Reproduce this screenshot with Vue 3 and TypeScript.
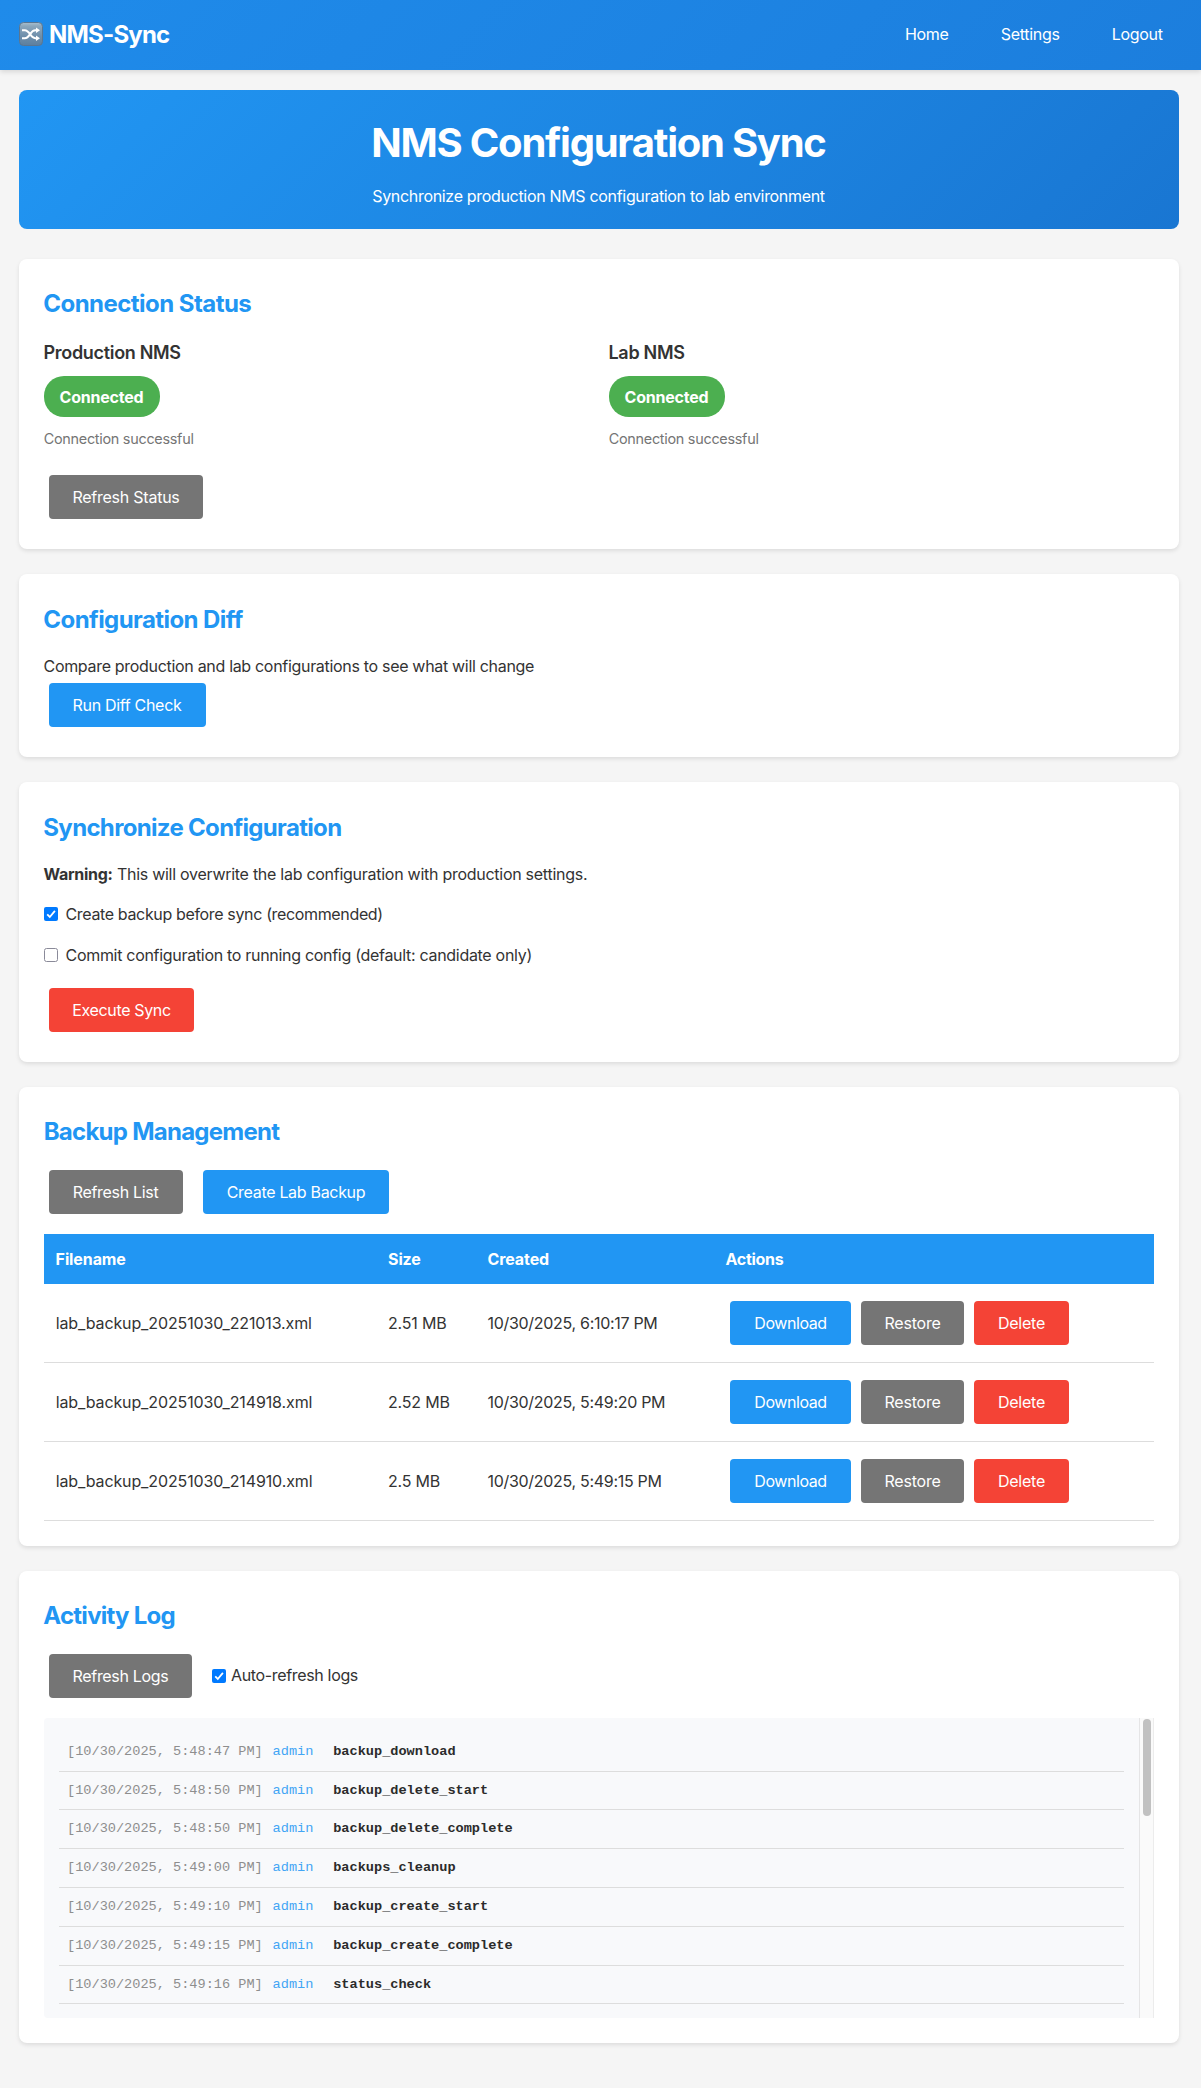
<script setup lang="ts">
import { ref } from 'vue'

interface Backup {
  filename: string
  size: string
  created: string
}

interface LogEntry {
  time: string
  user: string
  action: string
}

const navLinks: string[] = ['Home', 'Settings', 'Logout']
const systems: string[] = ['Production NMS', 'Lab NMS']

const createBackup = ref(true)
const commitConfig = ref(false)
const autoRefresh = ref(true)

const backups: Backup[] = [
  { filename: 'lab_backup_20251030_221013.xml', size: '2.51 MB', created: '10/30/2025, 6:10:17 PM' },
  { filename: 'lab_backup_20251030_214918.xml', size: '2.52 MB', created: '10/30/2025, 5:49:20 PM' },
  { filename: 'lab_backup_20251030_214910.xml', size: '2.5 MB', created: '10/30/2025, 5:49:15 PM' },
]

const logs: LogEntry[] = [
  { time: '10/30/2025, 5:48:47 PM', user: 'admin', action: 'backup_download' },
  { time: '10/30/2025, 5:48:50 PM', user: 'admin', action: 'backup_delete_start' },
  { time: '10/30/2025, 5:48:50 PM', user: 'admin', action: 'backup_delete_complete' },
  { time: '10/30/2025, 5:49:00 PM', user: 'admin', action: 'backups_cleanup' },
  { time: '10/30/2025, 5:49:10 PM', user: 'admin', action: 'backup_create_start' },
  { time: '10/30/2025, 5:49:15 PM', user: 'admin', action: 'backup_create_complete' },
  { time: '10/30/2025, 5:49:16 PM', user: 'admin', action: 'status_check' },
]
</script>

<template>
  <div class="page">
    <header class="topbar">
      <div class="brand">
        <svg class="brand-icon" viewBox="0 0 24 24" width="24" height="24" aria-hidden="true">
          <defs>
            <linearGradient id="tile" x1="0" y1="0" x2="0" y2="1">
              <stop offset="0" stop-color="#a9bfce" />
              <stop offset="0.16" stop-color="#8ba6bb" />
              <stop offset="0.6" stop-color="#6f8fab" />
              <stop offset="1" stop-color="#5c7f9f" />
            </linearGradient>
          </defs>
          <rect x="0.5" y="0.5" width="23" height="23" rx="4" fill="url(#tile)" stroke="#5a7691" />
          <path d="M3 8.2h2.8c5.2 0 5.4 8 10.4 8h1.6M3 16.2h2.8c5.2 0 5.4-8 10.4-8h1.6" fill="none" stroke="#fff" stroke-width="2" />
          <path d="M17 5.4 21 8.2 17 11zM17 13.4l4 2.8-4 2.8z" fill="#fff" />
        </svg>
        <span>NMS-Sync</span>
      </div>
      <nav class="nav">
        <a v-for="link in navLinks" :key="link">{{ link }}</a>
      </nav>
    </header>

    <main class="container">
      <section class="hero">
        <h1>NMS Configuration Sync</h1>
        <p>Synchronize production NMS configuration to lab environment</p>
      </section>

      <section class="card">
        <h2 class="h-status">Connection Status</h2>
        <div class="systems">
          <div v-for="name in systems" :key="name">
            <h3>{{ name }}</h3>
            <span class="pill">Connected</span>
            <p class="message">Connection successful</p>
          </div>
        </div>
        <div class="actions">
          <button class="btn grey b-status">Refresh Status</button>
        </div>
      </section>

      <section class="card">
        <h2 class="h-diff">Configuration Diff</h2>
        <p class="lead">Compare production and lab configurations to see what will change</p>
        <div class="actions">
          <button class="btn blue b-diff">Run Diff Check</button>
        </div>
      </section>

      <section class="card">
        <h2 class="h-sync">Synchronize Configuration</h2>
        <p class="lead warning"><strong>Warning:</strong> This will overwrite the lab configuration with production settings.</p>
        <div class="checks">
          <div class="check" @click="createBackup = !createBackup">
            <svg class="box" viewBox="0 0 14 14" width="14" height="14">
              <rect v-if="createBackup" width="14" height="14" rx="2" fill="#007aff" />
              <rect v-else x="0.5" y="0.5" width="13" height="13" rx="2" fill="#fff" stroke="#8a8a99" />
              <path v-if="createBackup" d="M3.2 7.4 5.8 10 10.9 3.9" fill="none" stroke="#fff" stroke-width="1.8" />
            </svg>
            <span class="backup-label">Create backup before sync (recommended)</span>
          </div>
          <div class="check" @click="commitConfig = !commitConfig">
            <svg class="box" viewBox="0 0 14 14" width="14" height="14">
              <rect v-if="commitConfig" width="14" height="14" rx="2" fill="#007aff" />
              <rect v-else x="0.5" y="0.5" width="13" height="13" rx="2" fill="#fff" stroke="#8a8a99" />
              <path v-if="commitConfig" d="M3.2 7.4 5.8 10 10.9 3.9" fill="none" stroke="#fff" stroke-width="1.8" />
            </svg>
            <span class="commit-label">Commit configuration to running config (default: candidate only)</span>
          </div>
        </div>
        <div class="actions">
          <button class="btn red b-sync">Execute Sync</button>
        </div>
      </section>

      <section class="card">
        <h2 class="h-backup">Backup Management</h2>
        <div class="actions spaced">
          <button class="btn grey b-list">Refresh List</button>
          <button class="btn blue b-create">Create Lab Backup</button>
        </div>
        <table>
          <colgroup>
            <col class="c-file" />
            <col class="c-size" />
            <col class="c-date" />
            <col />
          </colgroup>
          <thead>
            <tr>
              <th class="th-file">Filename</th>
              <th>Size</th>
              <th>Created</th>
              <th class="th-actions">Actions</th>
            </tr>
          </thead>
          <tbody>
            <tr v-for="b in backups" :key="b.filename">
              <td class="file">{{ b.filename }}</td>
              <td class="size">{{ b.size }}</td>
              <td class="date">{{ b.created }}</td>
              <td>
                <div class="row-actions">
                  <button class="btn blue b-download">Download</button>
                  <button class="btn grey b-restore">Restore</button>
                  <button class="btn red b-delete">Delete</button>
                </div>
              </td>
            </tr>
          </tbody>
        </table>
      </section>

      <section class="card">
        <h2 class="h-log">Activity Log</h2>
        <div class="actions spaced">
          <button class="btn grey b-logs">Refresh Logs</button>
          <div class="auto" @click="autoRefresh = !autoRefresh">
            <svg class="box" viewBox="0 0 14 14" width="14" height="14">
              <rect v-if="autoRefresh" width="14" height="14" rx="2" fill="#007aff" />
              <rect v-else x="0.5" y="0.5" width="13" height="13" rx="2" fill="#fff" stroke="#8a8a99" />
              <path v-if="autoRefresh" d="M3.2 7.4 5.8 10 10.9 3.9" fill="none" stroke="#fff" stroke-width="1.8" />
            </svg>
            <span>Auto-refresh logs</span>
          </div>
        </div>
        <div class="log">
          <div class="entries">
            <div v-for="(l, i) in logs" :key="i" class="entry">
              <span class="time">[{{ l.time }}]</span>
              <span class="user">{{ l.user }}</span>
              <strong>{{ l.action }}</strong>
            </div>
          </div>
          <div class="track"><div class="thumb"></div></div>
        </div>
      </section>
    </main>
  </div>
</template>

<style>
body {
  margin: 0;
  background: #f5f5f5;
}
</style>

<style scoped>
.page {
  height: 2088px;
  overflow: hidden;
  background: #f5f5f5;
  color: #333;
  font: 400 16px/25.6px Inter, "Liberation Sans", sans-serif;
  letter-spacing: -0.31px;
}
h1, h2, h3, p { margin: 0; }

.topbar {
  display: flex;
  align-items: center;
  justify-content: space-between;
  box-sizing: border-box;
  height: 70px;
  padding: 0 38.4px 0 19px;
  color: #fff;
  background: linear-gradient(135deg, #1f8bea, #1c7edd);
  box-shadow: 0 2px 5px rgba(0, 0, 0, 0.12);
}
.brand {
  display: flex;
  align-items: center;
  gap: 6px;
  font-size: 24px;
  font-weight: 700;
  line-height: 38.4px;
  letter-spacing: -0.8px;
}
.brand-icon { display: block; margin-top: -2px; }
.nav { display: flex; gap: 52.2px; }

.container { width: 1160px; margin: 20px 0 0 19px; }
.hero {
  box-sizing: border-box;
  height: 139px;
  margin-bottom: 30px;
  padding: 21px 21px 19px 20px;
  border-radius: 8px;
  color: #fff;
  text-align: center;
  background: linear-gradient(135deg, #2196f3, #1976d2);
}
.hero h1 {
  margin-bottom: 9.4px;
  font-size: 40px;
  line-height: 64px;
  letter-spacing: -1.25px;
}
.hero p { letter-spacing: -0.32px; }

.card {
  margin-bottom: 25px;
  padding: 25px;
  border-radius: 8px;
  background: #fff;
  box-shadow: 0 2px 4px rgba(0, 0, 0, 0.1);
}
h2 {
  margin: 0 0 14px -0.7px;
  padding-top: 1px;
  color: #2196f3;
  font-size: 24px;
  line-height: 38.4px;
}
.h-status { letter-spacing: -0.54px; }
.h-diff { padding-top: 2.2px; margin-bottom: 12.8px; letter-spacing: -0.58px; }
.h-sync { padding-top: 2.2px; margin-bottom: 12.8px; letter-spacing: -0.67px; }
.h-backup { padding-top: 1.5px; margin-left: -0.3px; margin-bottom: 13.5px; letter-spacing: -0.74px; }
.h-log { padding-top: 1.5px; margin-bottom: 13.5px; letter-spacing: -0.74px; }
.lead { margin: 0 0 -1.8px -0.5px; padding-top: 1.8px; }
.warning { letter-spacing: -0.27px; }

.systems {
  display: grid;
  grid-template-columns: 1fr 1fr;
  gap: 20px;
  margin-bottom: 19.6px;
}
h3 {
  margin: 0 0 7.4px -0.5px;
  padding-top: 1px;
  font-size: 18px;
  font-weight: 600;
  line-height: 30px;
}
.pill {
  display: block;
  box-sizing: border-box;
  width: 116px;
  padding: 9.5px 1px 5.9px 0;
  border-radius: 20px;
  color: #fff;
  background: #4caf50;
  font-weight: 700;
  text-align: center;
  letter-spacing: -0.22px;
}
.message {
  margin: 10.2px 0 0 -0.3px;
  color: #757575;
  font-size: 14.4px;
  line-height: 23px;
  letter-spacing: -0.27px;
}

.actions { display: flex; align-items: center; gap: 10px; }
.spaced { margin-bottom: 15px; }
.btn {
  box-sizing: border-box;
  height: 44px;
  margin: 5px;
  padding: 2px 0 0;
  border: 0;
  border-radius: 4px;
  color: #fff;
  font: inherit;
  letter-spacing: -0.31px;
  white-space: nowrap;
}
.grey { background: #757575; }
.blue { background: #2196f3; }
.red { background: #f44336; }
.b-status { width: 154px; letter-spacing: -0.24px; }
.b-diff { width: 157px; padding-right: 1px; }
.b-sync { width: 145px; letter-spacing: -0.34px; }
.b-list { width: 134px; padding-right: 1px; }
.b-create { width: 186px; }
.b-logs { width: 143px; }
.b-download { width: 121px; letter-spacing: -0.42px; }
.b-restore { width: 103px; letter-spacing: -0.22px; }
.b-delete { width: 95px; letter-spacing: -0.23px; }

.checks { padding-top: 15px; }
.check {
  display: flex;
  align-items: center;
  gap: 7.5px;
  margin-bottom: 15px;
  line-height: 26px;
}
.backup-label { letter-spacing: -0.35px; }
.commit-label { letter-spacing: -0.3px; }
.box { display: block; flex: none; }
.auto {
  display: flex;
  align-items: center;
  gap: 5px;
  margin-left: 5px;
  letter-spacing: -0.34px;
}

table { width: 1110px; border-collapse: collapse; table-layout: fixed; }
.c-file { width: 333px; }
.c-size { width: 99.5px; }
.c-date { width: 238.5px; }
th {
  height: 25.6px;
  padding: 13px 0 11px 11px;
  color: #fff;
  background: #2196f3;
  text-align: left;
  font-weight: 700;
  letter-spacing: -0.1px;
}
.th-file { padding-left: 11.6px; }
.th-actions { padding-left: 10.6px; letter-spacing: -0.32px; }
td { height: 78px; padding: 0 0 0 11px; border-bottom: 1px solid #ddd; }
.file, .size, .date { height: 76px; padding-top: 2px; }
.file { padding-left: 11.7px; letter-spacing: -0.12px; }
.size { letter-spacing: -0.2px; }
.date { letter-spacing: -0.3px; }
.row-actions { display: flex; margin-left: -1px; }

.log {
  display: flex;
  height: 300px;
  overflow: hidden;
  border-radius: 4px 0 0 4px;
  background: #f8f9fb;
  font: 13.6px/21.76px "Liberation Mono", monospace;
  letter-spacing: 0;
}
.entries { flex: 1; padding: 15px; }
.entry {
  display: flex;
  padding: 8px;
  border-bottom: 1px solid #ddd;
}
.time { margin-right: 9.8px; color: #8e8e8e; }
.user { margin-right: 19.8px; color: #42a5f5; }
.entry strong { color: #2b2b2b; }
.track {
  box-sizing: border-box;
  width: 15px;
  padding: 1px 2px 0 3px;
  border-left: 1px solid #e5e5e6;
  border-right: 1px solid #ececec;
  background: #fafafa;
}
.thumb { width: 8px; height: 97px; border-radius: 4px; background: #c1c1c1; }
</style>
